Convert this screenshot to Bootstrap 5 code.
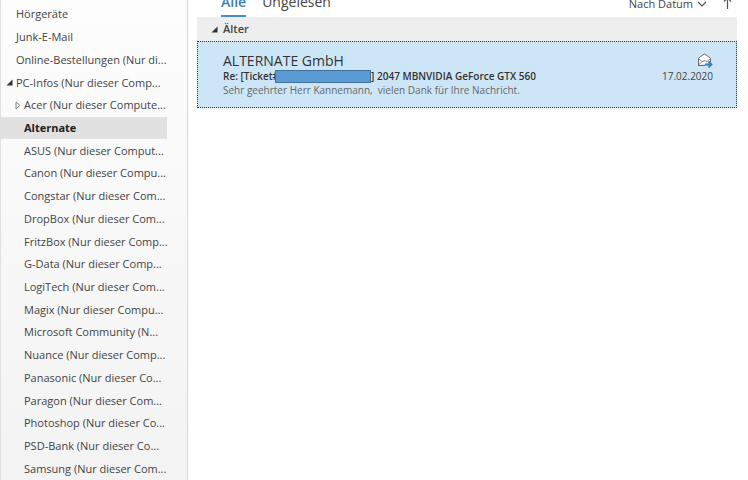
<!DOCTYPE html>
<html lang="de">
<head>
<meta charset="utf-8">
<meta name="viewport" content="width=device-width, initial-scale=1">
<title>Posteingang – Alternate</title>
<link href="https://cdn.jsdelivr.net/npm/bootstrap@5.3.0/dist/css/bootstrap.min.css" rel="stylesheet">
<style>
body { font-family: "Open Sans", "Noto Sans", sans-serif; font-size: 11px; line-height: 14px; color: #444; background: #fff; }
a, a:hover { color: inherit; text-decoration: none; }
.folders { width: 188px; padding-top: 3px; background: linear-gradient(#fdfdfd, #f3f3f3); border-left: 1px solid #e0e0e0; border-right: 1px solid #d8d8d8; }
.folder { margin-right: 20px; padding-left: 15px; white-space: nowrap; }
.folder.sub { padding-left: 23px; }
.folder.open { padding-left: 5px; }
.folder.closed { padding-left: 14px; }
.folder svg { margin-right: 3px; }
.folder.current { background: #e1e1e1; color: #222; font-weight: 700; }
.mails { padding: 0 11px 0 9px; }
.filters { height: 17px; padding: 0 5px 0 24px; overflow: hidden; }
.filters button { border: 0; background: none; padding: 0 0 3px; color: inherit; }
.filter { font-size: 14px; line-height: 20px; border-bottom: 2px solid transparent !important; }
.filter.on { color: #3a7fb5; font-weight: 600; border-bottom-color: #4a8fc0 !important; }
.filters .sort { font-size: 11px; line-height: 20px; }
.filters .direction { padding-bottom: 8px; }
.group { height: 24px; padding: 0 14px !important; background: #eee; border: 0; font-weight: 600; color: #444; }
.mail { padding: 10px 23px 10px 25px; background: #cde6f7; border: 1px dotted #333; }
.sender { font-size: 14px; line-height: 17px; color: #333; }
.subject { color: #333; font-weight: 600; font-size: 10px; }
.redacted { width: 96px; height: 13px; margin-left: -4px; background: #5b9bd5; border: 1px solid #41719c; z-index: 1; }
.date { font-size: 10px; }
.preview { color: #666; font-size: 10px; font-weight: 500; white-space: pre; }
</style>
<script src="https://cdn.jsdelivr.net/npm/bootstrap@5.3.0/dist/js/bootstrap.bundle.min.js"></script>
</head>
<body>
<div class="d-flex min-vh-100">
  <nav class="folders d-flex flex-column flex-shrink-0" aria-label="Ordner">
    <a href="#" class="folder d-flex align-items-center flex-fill">Hörgeräte</a>
    <a href="#" class="folder d-flex align-items-center flex-fill">Junk-E-Mail</a>
    <a href="#" class="folder d-flex align-items-center flex-fill">Online-Bestellungen (Nur di...</a>
    <a href="#" class="folder open d-flex align-items-center flex-fill"><svg width="7" height="7" viewBox="0 0 7 7" aria-hidden="true"><path d="M6.500.5V6.500H.5Z" fill="#333"/></svg>PC-Infos (Nur dieser Comp...</a>
    <a href="#" class="folder closed d-flex align-items-center flex-fill"><svg width="6" height="9" viewBox="0 0 6 9" aria-hidden="true"><path d="M1 1L5 4.500L1 8Z" fill="none" stroke="#777" stroke-width=".9"/></svg>Acer (Nur dieser Compute...</a>
    <a href="#" class="folder sub current d-flex align-items-center flex-fill" aria-current="true">Alternate</a>
    <a href="#" class="folder sub d-flex align-items-center flex-fill">ASUS (Nur dieser Comput...</a>
    <a href="#" class="folder sub d-flex align-items-center flex-fill">Canon (Nur dieser Compu...</a>
    <a href="#" class="folder sub d-flex align-items-center flex-fill">Congstar (Nur dieser Com...</a>
    <a href="#" class="folder sub d-flex align-items-center flex-fill">DropBox (Nur dieser Com...</a>
    <a href="#" class="folder sub d-flex align-items-center flex-fill">FritzBox (Nur dieser Comp...</a>
    <a href="#" class="folder sub d-flex align-items-center flex-fill">G-Data (Nur dieser Comp...</a>
    <a href="#" class="folder sub d-flex align-items-center flex-fill">LogiTech (Nur dieser Com...</a>
    <a href="#" class="folder sub d-flex align-items-center flex-fill">Magix (Nur dieser Compu...</a>
    <a href="#" class="folder sub d-flex align-items-center flex-fill">Microsoft Community (N...</a>
    <a href="#" class="folder sub d-flex align-items-center flex-fill">Nuance (Nur dieser Comp...</a>
    <a href="#" class="folder sub d-flex align-items-center flex-fill">Panasonic (Nur dieser Co...</a>
    <a href="#" class="folder sub d-flex align-items-center flex-fill">Paragon (Nur dieser Com...</a>
    <a href="#" class="folder sub d-flex align-items-center flex-fill">Photoshop (Nur dieser Co...</a>
    <a href="#" class="folder sub d-flex align-items-center flex-fill">PSD-Bank (Nur dieser Co...</a>
    <a href="#" class="folder sub d-flex align-items-center flex-fill">Samsung (Nur dieser Com...</a>
  </nav>
  <main class="mails flex-grow-1">
    <div class="filters d-flex align-items-end">
      <button type="button" class="filter on me-3">Alle</button>
      <button type="button" class="filter">Ungelesen</button>
      <button type="button" class="sort ms-auto me-3 d-flex align-items-center">Nach Datum<svg class="ms-1" width="10" height="6" viewBox="0 0 10 6" aria-hidden="true"><path d="M1 1L5 5L9 1" fill="none" stroke="#555" stroke-width="1.200"/></svg></button>
      <button type="button" class="direction d-flex" aria-label="Sortierung umkehren"><svg width="9" height="12" viewBox="0 0 9 12" aria-hidden="true"><path d="M4.500 12V1M1 4.500L4.500 1L8 4.500" fill="none" stroke="#555" stroke-width="1.200"/></svg></button>
    </div>
    <button type="button" class="group d-flex align-items-center w-100"><svg class="me-1" width="8" height="7" viewBox="0 0 8 7" aria-hidden="true"><path d="M6.500.5V6.500H.5Z" fill="#333"/></svg>Älter</button>
    <a href="#" class="mail d-block">
      <div class="d-flex align-items-center justify-content-between">
        <span class="sender">ALTERNATE GmbH</span>
        <svg width="16" height="15" viewBox="0 0 16 15" aria-label="Weitergeleitet"><path d="M1.500 12.500V5.500Q2 4.500 7.500 1Q13 4.500 13.500 5.500V9M1.500 12.500H8" fill="#fff" stroke="#666"/><path d="M1.500 5.500L5 8.500Q7.500 7 10 8.500L13.500 5.500M1.500 12L5 8.500" fill="none" stroke="#777" stroke-width=".9"/><path d="M8 11.500H14M11.500 8.500L14.500 11.500L11.500 14.500" fill="none" stroke="#3a7fb5" stroke-width="1.800"/></svg>
      </div>
      <div class="d-flex align-items-center justify-content-between">
        <span class="subject d-flex align-items-center">Re: [Ticket#<span class="redacted"></span>]&nbsp;2047 MBNVIDIA GeForce GTX 560</span>
        <span class="date">17.02.2020</span>
      </div>
      <div class="preview">Sehr geehrter Herr Kannemann,  vielen Dank für Ihre Nachricht.</div>
    </a>
  </main>
</div>
</body>
</html>
